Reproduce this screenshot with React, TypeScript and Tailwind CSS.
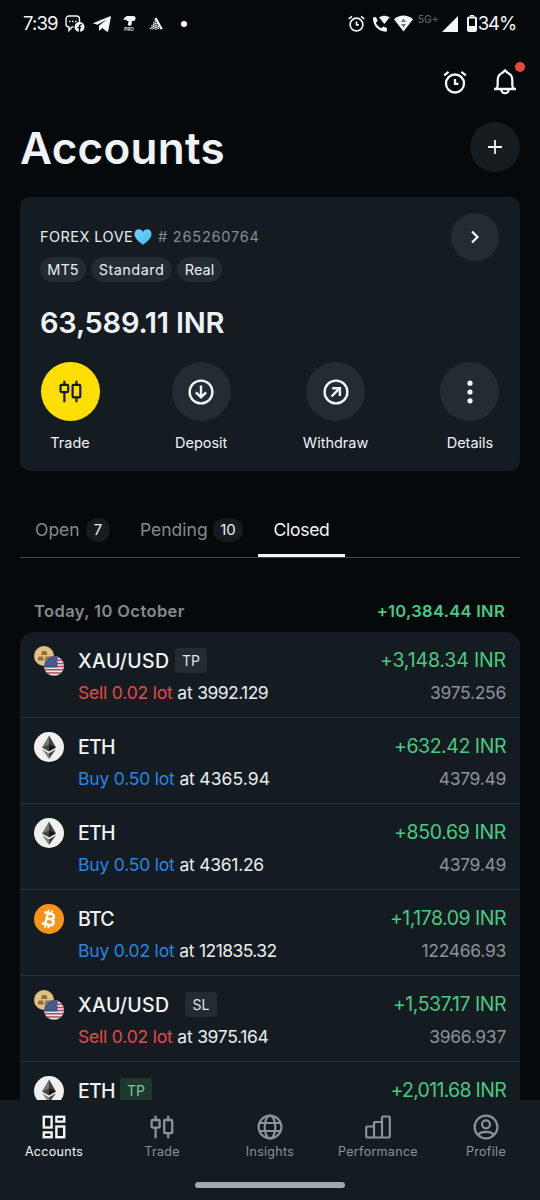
import React from 'react';

interface IconProps {
  className?: string;
}

interface Trade {
  symbol: 'XAU/USD' | 'ETH' | 'BTC';
  symbolClass: string;
  tag?: string;
  tagClass?: string;
  side?: 'Buy' | 'Sell';
  lot?: string;
  open?: string;
  openClass?: string;
  profit: string;
  profitClass: string;
  close?: string;
}

const trades: Trade[] = [
  { symbol: 'XAU/USD', symbolClass: 'w-[91px] tracking-[0.4px]', tag: 'TP', tagClass: 'ml-[6px] bg-[#232c32] text-[#dfe4e8]', side: 'Sell', lot: '0.02', open: '3992.129', openClass: 'tracking-[-0.55px]', profit: '+3,148.34 INR', profitClass: 'tracking-[-0.15px]', close: '3975.256' },
  { symbol: 'ETH', symbolClass: 'tracking-[-0.7px]', side: 'Buy', lot: '0.50', open: '4365.94', openClass: 'tracking-[0.1px]', profit: '+632.42 INR', profitClass: 'tracking-[-0.45px]', close: '4379.49' },
  { symbol: 'ETH', symbolClass: 'tracking-[-0.7px]', side: 'Buy', lot: '0.50', open: '4361.26', openClass: 'tracking-[-0.3px]', profit: '+850.69 INR', profitClass: 'tracking-[-0.35px]', close: '4379.49' },
  { symbol: 'BTC', symbolClass: 'tracking-[-0.8px]', side: 'Buy', lot: '0.02', open: '121835.32', openClass: 'tracking-[-0.6px]', profit: '+1,178.09 INR', profitClass: 'tracking-[-0.5px]', close: '122466.93' },
  { symbol: 'XAU/USD', symbolClass: 'w-[91px] tracking-[0.4px]', tag: 'SL', tagClass: 'ml-[16px] bg-[#232c32] text-[#dfe4e8]', side: 'Sell', lot: '0.02', open: '3975.164', openClass: 'tracking-[-0.35px]', profit: '+1,537.17 INR', profitClass: 'tracking-[-0.5px]', close: '3966.937' },
  { symbol: 'ETH', symbolClass: 'w-[37px] tracking-[-0.7px]', tag: 'TP', tagClass: 'ml-[5px] bg-[#1c382f] text-[#6fce98]', profit: '+2,011.68 INR', profitClass: 'tracking-[-0.7px]' },
];

const AlarmIcon: React.FC<IconProps> = ({ className }) => (
  <svg viewBox="0 0 24 24" className={className} fill="none" stroke="currentColor" strokeWidth="2.3">
    <circle cx="12" cy="13.5" r="9" />
    <path d="M12 9v4.900h3.400M1.200 5.400 5.600 1.900M22.800 5.400l-4.400-3.500" />
  </svg>
);

const CandlesIcon: React.FC<IconProps> = ({ className }) => (
  <svg viewBox="0 0 24 24" className={className} fill="none" stroke="currentColor" strokeWidth="2.3">
    <rect x="1.600" y="5" width="8" height="7.600" rx="1" />
    <rect x="14.200" y="5" width="8" height="13.200" rx="1" />
    <path d="M5.600 .8V5M5.600 12.600V23.200M18.200 .8V5M18.200 18.200v5" />
  </svg>
);

const DepositIcon: React.FC<IconProps> = ({ className }) => (
  <svg viewBox="0 0 26 26" className={className} fill="none" stroke="currentColor" strokeWidth="2.4">
    <circle cx="13" cy="13" r="11.400" />
    <path d="M13 6.500v12M7.900 13.400l5.100 4.900 5.100-4.900" />
  </svg>
);

const WithdrawIcon: React.FC<IconProps> = ({ className }) => (
  <svg viewBox="0 0 26 26" className={className} fill="none" stroke="currentColor" strokeWidth="2.4">
    <circle cx="13" cy="13" r="11.400" />
    <path d="M8.500 17.500l8.300-8.300M9.200 9.200h7.700v7.700" />
  </svg>
);

const DotsIcon: React.FC<IconProps> = ({ className }) => (
  <svg viewBox="0 0 26 26" className={className} fill="currentColor">
    <circle cx="13" cy="4.2" r="2.6" />
    <circle cx="13" cy="13" r="2.6" />
    <circle cx="13" cy="21.8" r="2.6" />
  </svg>
);

const DashboardIcon: React.FC<IconProps> = ({ className }) => (
  <svg viewBox="0 0 24 24" className={className} fill="none" stroke="currentColor" strokeWidth="2.4">
    <rect x="1.8" y="1.8" width="7.800" height="10.700" />
    <rect x="14.400" y="1.8" width="7.800" height="4.800" />
    <rect x="1.8" y="17.400" width="7.800" height="4.800" />
    <rect x="14.400" y="11.500" width="7.800" height="10.700" />
  </svg>
);

const GlobeIcon: React.FC<IconProps> = ({ className }) => (
  <svg viewBox="0 0 26 26" className={className} fill="none" stroke="currentColor" strokeWidth="2.2">
    <circle cx="13" cy="13" r="11.400" />
    <ellipse cx="13" cy="13" rx="5.3" ry="11.400" />
    <path d="M2.400 9h21.200M2.400 17h21.200" />
  </svg>
);

const BarsIcon: React.FC<IconProps> = ({ className }) => (
  <svg viewBox="0 0 26 24" className={className} fill="none" stroke="currentColor" strokeWidth="2.2">
    <path d="M9 22.500H2.200a1 1 0 0 1-1-1v-9a1 1 0 0 1 1-1H9M17 22.500H9V8a1 1 0 0 1 1-1h7" />
    <rect x="17" y="1.500" width="7.800" height="21" rx="1" />
  </svg>
);

const ProfileIcon: React.FC<IconProps> = ({ className }) => (
  <svg viewBox="0 0 26 26" className={className} fill="none" stroke="currentColor" strokeWidth="2.2">
    <circle cx="13" cy="13" r="11.400" />
    <circle cx="13" cy="10.300" r="4" />
    <path d="M5.200 21.200c1.200-2.700 4.300-3.400 7.800-3.400s6.600.7 7.800 3.400" />
  </svg>
);

const StatusBar: React.FC = () => (
  <div className="flex h-[47px] shrink-0 items-center justify-between pl-[23px] pr-[24px] text-[#f3f6f7]">
    <div className="flex items-center">
      <span className="w-[42px] pt-px text-[18.500px] tracking-[-0.900px]">7:39</span>
      <svg viewBox="0 0 20 18" className="h-[18px] w-5" fill="none">
        <path d="M14.500 8V4a3 3 0 0 0-3-3H4a3 3 0 0 0-3 3v5a3 3 0 0 0 3 3v3.500l3-3.500h1.500" stroke="currentColor" strokeWidth="1.400" />
        <path d="M4 6.500h1.500M7 6.500h1.500M10 6.500h1.500" stroke="currentColor" strokeWidth="1.400" />
        <circle cx="14.500" cy="12" r="5" fill="currentColor" />
        <path d="M14.500 17v-5.800q0-1.700 2-1.400M12.600 12.600h3.600" stroke="#05090c" strokeWidth="1.400" />
      </svg>
      <svg viewBox="0 0 18 16" className="ml-[8px] h-4 w-[18px]" fill="currentColor">
        <path d="M0 7.300 17 .2c.6-.2 1 .1.900.8L15.300 14.800c-.2.900-.9 1.100-1.600.6L9.200 12l-2.400 2.400c-.4.400-.8.200-.8-.4V9.800l8-6.600-9.400 5.600-4.300-1.200z" />
      </svg>
      <div className="ml-[11px] flex w-[14px] flex-col items-center">
        <svg viewBox="0 0 14 11" className="h-[10px] w-[13px]" fill="currentColor">
          <path d="M1.500 2 4 0h8l2 2-1.500 3.500H9.500V9L7.500 11 5 10l1-4.500H4.500L3 4 0 4.500z" />
        </svg>
        <span className="mt-px text-[4.500px] leading-[5px] font-semibold">PRO</span>
      </div>
      <svg viewBox="0 0 14 13" className="ml-[13px] h-[13px] w-[14px]" fill="none" stroke="currentColor">
        <path d="M6.500 1 12.800 12.300" strokeWidth="2.200" />
        <path d="M6.200 2.500V12.500M4.600 5.200V12.500M3 8V12.500M1.300 10.800v1.700M7.800 6V12.500M9.400 9V12.500" strokeWidth="1.300" strokeDasharray="1.300 .5" />
      </svg>
      <span className="ml-[18px] size-[6px] rounded-full bg-white" />
    </div>
    <div className="flex items-center">
      <AlarmIcon className="size-[17px]" />
      <svg viewBox="0 0 18 18" className="ml-[7px] size-[18px]" fill="currentColor">
        <path d="M1 2.600 4 2l1.700 4-1.900 1.800c1.100 2.600 2.900 4.400 5.500 5.500l1.900-1.800 3.700 1.600v3.500C7.500 17.500.5 11 1 2.600z" />
        <path d="M7 2.300C10 .2 14.500.2 17.700 2.300L12.300 9z" />
      </svg>
      <svg viewBox="0 0 19 17" className="ml-[4px] h-[17px] w-[19px]" fill="currentColor">
        <path d="M0 4.200C5.500-.6 13.500-.6 19 4.200L9.500 16.500z" />
        <path d="M9.500 3.500 12 7H7zM9.500 12.500 7 9h5z" fill="#72777a" />
      </svg>
      <span className="relative -top-[4px] ml-[5px] w-[24px] text-[10.500px] font-medium text-[#596066] tracking-[-0.200px]">5G+</span>
      <svg viewBox="0 0 16 16" className="size-4" fill="currentColor">
        <path d="M0 16 16 0v16z" />
      </svg>
      <svg viewBox="0 0 10 17" className="ml-[9px] h-[17px] w-[10px]">
        <path d="M3 0h4v1.500H3z" fill="currentColor" />
        <rect x="1" y="2.500" width="8" height="13.500" rx="1" fill="none" stroke="currentColor" strokeWidth="2" />
        <path d="M1 11h8v5H1z" fill="currentColor" />
      </svg>
      <span className="ml-px text-[18.500px] tracking-[-1.100px]">34%</span>
    </div>
  </div>
);

const HeartIcon: React.FC<IconProps> = ({ className }) => (
  <svg viewBox="0 0 18 16" className={className}>
    <defs>
      <linearGradient id="heart" x1="0" y1="0" x2="1" y2="1">
        <stop offset="0" stopColor="#72d4ff" />
        <stop offset="1" stopColor="#46bdf6" />
      </linearGradient>
    </defs>
    <path d="M9 15.800C4.500 12.500.5 9 .5 5 .5-.5 7-1.200 9 3c2-4.200 8.500-3.500 8.500 2 0 4-4 7.500-8.500 10.800z" fill="url(#heart)" />
  </svg>
);

const accountTags = [
  { text: 'MT5', className: 'w-[46px]' },
  { text: 'Standard', className: 'w-[81px] tracking-[0.450px]' },
  { text: 'Real', className: 'w-[45px]' },
];

const actions = [
  { label: 'Trade', icon: <CandlesIcon className="size-[23px]" />, circle: 'bg-[#ffde02] text-[#151c21]' },
  { label: 'Deposit', icon: <DepositIcon className="size-[26px]" />, circle: 'bg-[#232c32] text-[#f3f6f8]' },
  { label: 'Withdraw', icon: <WithdrawIcon className="size-[26px]" />, circle: 'bg-[#232c32] text-[#f3f6f8]' },
  { label: 'Details', icon: <DotsIcon className="size-[26px]" />, circle: 'bg-[#232c32] text-[#f3f6f8]' },
];

const AccountCard: React.FC = () => (
  <section className="mx-5 mt-[25px] h-[274px] shrink-0 rounded-[10px] bg-[#151c21] pt-[16px] pr-[21px] pl-5">
    <div className="flex h-12 items-center justify-between">
      <div className="flex items-center text-[14.500px]">
        <span className="w-[94px] whitespace-nowrap tracking-[0.450px] text-[#e8edf0]">FOREX LOVE</span>
        <HeartIcon className="h-4 w-[18px]" />
        <span className="ml-[6px] tracking-[0.800px] text-[#858c92]"># 265260764</span>
      </div>
      <button className="flex size-12 items-center justify-center rounded-full bg-[#232c32]">
        <svg viewBox="0 0 12 14" className="h-[14px] w-3" fill="none" stroke="#f3f6f8" strokeWidth="2.200">
          <path d="m3 1.500 5.500 5.500L3 12.500" />
        </svg>
      </button>
    </div>
    <div className="-mt-[4px] flex gap-[5px]">
      {accountTags.map((tag) => (
        <span key={tag.text} className={`flex h-[25px] items-center justify-center rounded-full bg-[#232c32] pt-px text-[14.500px] text-[#e8edf0] ${tag.className}`}>
          {tag.text}
        </span>
      ))}
    </div>
    <div className="mt-[21px] text-[29px] leading-[40px] font-semibold tracking-[-0.250px] text-[#eff3f6]">63,589.11 INR</div>
    <div className="mt-[19px] -mr-[0.500px] ml-[0.500px] flex justify-between">
      {actions.map((a) => (
        <div key={a.label} className="flex min-w-[59px] flex-col items-center">
          <span className={`flex size-[59px] items-center justify-center rounded-full ${a.circle}`}>{a.icon}</span>
          <span className="mt-[12px] text-[14.500px] leading-[20px] text-[#eff3f6]">{a.label}</span>
        </div>
      ))}
    </div>
  </section>
);

const Tabs: React.FC = () => (
  <div className="mx-5 mt-[32px] flex h-[55px] shrink-0 border-b border-[#41474b] text-[17.500px] text-[#858a8e]">
    <div className="ml-[15px] flex h-[53px] w-[75px] items-center justify-between">
      <span className="pt-[2px]">Open</span>
      <span className="flex size-6 items-center justify-center rounded-full bg-[#171b20] pt-px text-[15px] text-[#e8edf0]">7</span>
    </div>
    <div className="ml-[30px] flex h-[53px] w-[103px] items-center justify-between">
      <span className="pt-[2px]">Pending</span>
      <span className="flex h-6 w-[30px] items-center justify-center rounded-full bg-[#171b20] pt-px text-[15px] text-[#e8edf0]">10</span>
    </div>
    <div className="ml-[15px] flex h-[54px] w-[87px] items-center justify-center border-b-[3px] border-[#f3f6f8] pt-[4px] text-[#f3f6f8]">
      <span className="tracking-[-0.250px]">Closed</span>
    </div>
  </div>
);

const GoldUsdLogo: React.FC = () => (
  <svg viewBox="0 0 30 30" className="size-[30px]">
    <defs>
      <clipPath id="flag">
        <circle cx="20" cy="20" r="10" />
      </clipPath>
    </defs>
    <circle cx="10" cy="10" r="10" fill="#dfc284" />
    <path d="M8 5h4.500l1 4H7zM4.500 10.500H9l1 4H3.700zM11.500 10.500h5l1 4h-6.700z" fill="#96703a" />
    <g clipPath="url(#flag)">
      <rect x="10" y="10" width="20" height="20" fill="#efe9ec" />
      <path d="M10 11h20M10 14.200h20M10 17.400h20M10 20.600h20M10 23.800h20M10 27h20M10 30h20" stroke="#b5455a" strokeWidth="1.500" />
      <rect x="10" y="10" width="13.500" height="11.500" fill="#3d5488" />
      <path d="M11 13h12M12 15.500h11M11 18h12" stroke="#8294b8" strokeWidth="0.700" strokeDasharray="1 1.500" />
    </g>
  </svg>
);

const EthLogo: React.FC = () => (
  <svg viewBox="0 0 30 30" className="size-[30px]">
    <circle cx="15" cy="15" r="15" fill="#f0f0ef" />
    <path d="M15 3.500v12.800L8 15.500z" fill="#777" />
    <path d="m15 3.500 7 12L15 16z" fill="#3d3d3d" />
    <path d="m8 15.500 7-3v7z" fill="#454545" />
    <path d="m22 15.500-7-3v7z" fill="#151515" />
    <path d="m8 17.300 7 4V27z" fill="#858585" />
    <path d="m22 17.300-7 4V27z" fill="#454545" />
  </svg>
);

const BtcLogo: React.FC = () => (
  <svg viewBox="0 0 30 30" className="size-[30px]">
    <circle cx="15" cy="15" r="15" fill="#f7931a" />
    <g transform="rotate(13 15 15)" fill="none" stroke="#fff">
      <path d="M9 9.500h7.200c4 0 4 5.300 0 5.300H12h5c4.200 0 4.200 5.900 0 5.900H9M12.500 9.500v11" strokeWidth="2.600" />
      <path d="M12.700 6V9M16.300 6V9M12.700 21v3.200M16.300 21v3.200" strokeWidth="1.900" />
    </g>
  </svg>
);

const logos = {
  'XAU/USD': <GoldUsdLogo />,
  ETH: <EthLogo />,
  BTC: <BtcLogo />,
};

const TradeRow: React.FC<{ trade: Trade }> = ({ trade }) => (
  <div className="flex h-[86px] shrink-0 border-b border-[#2a3136] px-[14px] pt-[14px]">
    <div className="w-11 shrink-0">{logos[trade.symbol]}</div>
    <div className="grow pt-px">
      <div className="flex h-7 items-center">
        <span className={`text-[19.500px] leading-6 font-medium text-[#eff3f6] ${trade.symbolClass}`}>{trade.symbol}</span>
        {trade.tag && (
          <span className={`-mt-px flex h-[25px] w-8 items-center justify-center rounded-[3px] text-[14px] ${trade.tagClass}`}>{trade.tag}</span>
        )}
      </div>
      {trade.side && (
        <div className="mt-[4px] text-[17.500px] leading-7 tracking-[-0.200px] text-[#e8edf0]">
          <span className={trade.side === 'Sell' ? 'text-[#e6494a]' : 'text-[#2587e5]'}>
            {trade.side} {trade.lot} lot
          </span>{' '}
          at <span className={trade.openClass}>{trade.open}</span>
        </div>
      )}
    </div>
    <div className="text-right">
      <div className={`text-[19.500px] leading-7 text-[#49c981] ${trade.profitClass}`}>{trade.profit}</div>
      {trade.close && <div className="mt-[5px] text-[17.500px] leading-7 tracking-[-0.300px] text-[#8b9298]">{trade.close}</div>}
    </div>
  </div>
);

const navItems = [
  { label: 'Accounts', icon: <DashboardIcon className="size-6" />, color: 'text-[#f3f6f8]' },
  { label: 'Trade', icon: <CandlesIcon className="size-6" />, color: 'text-[#8b9298]' },
  { label: 'Insights', icon: <GlobeIcon className="size-[26px]" />, color: 'text-[#8b9298]' },
  { label: 'Performance', icon: <BarsIcon className="h-6 w-[26px]" />, color: 'text-[#8b9298]' },
  { label: 'Profile', icon: <ProfileIcon className="size-[26px]" />, color: 'text-[#8b9298]' },
];

const BottomNav: React.FC = () => (
  <nav className="flex h-[100px] shrink-0 flex-col items-center bg-[#151c21]">
    <div className="grid w-full grid-cols-5 pt-[13px]">
      {navItems.map((item) => (
        <div key={item.label} className={`flex flex-col items-center ${item.color}`}>
          <span className="flex h-[27px] items-center">{item.icon}</span>
          <span className="mt-[4px] text-[12.500px] leading-4 tracking-[0.300px]">{item.label}</span>
        </div>
      ))}
    </div>
    <div className="mt-[22px] h-[6px] w-[150px] rounded-full bg-[#a3a8ad]" />
  </nav>
);

const App: React.FC = () => {
  return (
    <div className="flex h-[1200px] w-[540px] flex-col overflow-hidden bg-[#05090c] font-['Inter',sans-serif]">
      <StatusBar />
      <div className="flex h-[70px] shrink-0 items-center justify-end pr-[22px] text-[#f3f6f8]">
        <AlarmIcon className="size-6" />
        <div className="relative ml-[25px]">
          <svg viewBox="0 0 26 26" className="size-[26px]" fill="none" stroke="currentColor" strokeWidth="2.300">
            <path d="M2 20h22M4.500 19.500c1-1 1.200-2 1.200-4V11c0-3.300 1.700-6 4.800-7.300L13 1.500l2.500 2.200c3.100 1.300 4.800 4 4.800 7.300v4.500c0 2 .2 3 1.200 4M9.300 20.500a3.700 3.700 0 0 0 7.400 0" />
          </svg>
          <span className="absolute -top-[7px] left-[23px] size-[10px] rounded-full bg-[#e8473f]" />
        </div>
      </div>
      <div className="flex h-[55px] shrink-0 items-center justify-between pl-5 pr-5 pt-[5px]">
        <h1 className="pt-px text-[44px] font-semibold tracking-[0.300px] text-[#eff3f6]">Accounts</h1>
        <button className="flex size-[50px] items-center justify-center rounded-full bg-[#171c20]">
          <svg viewBox="0 0 14 14" className="size-[14px]" stroke="#f3f6f8" strokeWidth="1.800">
            <path d="M7 0v14M0 7h14" />
          </svg>
        </button>
      </div>
      <AccountCard />
      <Tabs />
      <div className="mt-[42px] mr-[35px] ml-[34px] flex h-[22px] shrink-0 items-center justify-between font-semibold">
        <span className="text-[16.500px] tracking-[0.400px] text-[#85898d]">Today, 10 October</span>
        <span className="text-[16.500px] tracking-[0.300px] text-[#49c981]">+10,384.44 INR</span>
      </div>
      <div className="mx-5 mt-[10px] flex min-h-0 flex-1 flex-col overflow-hidden rounded-t-[14px] bg-[#151c21]">
        {trades.map((trade, i) => (
          <TradeRow key={i} trade={trade} />
        ))}
      </div>
      <BottomNav />
    </div>
  );
};

export default App;
